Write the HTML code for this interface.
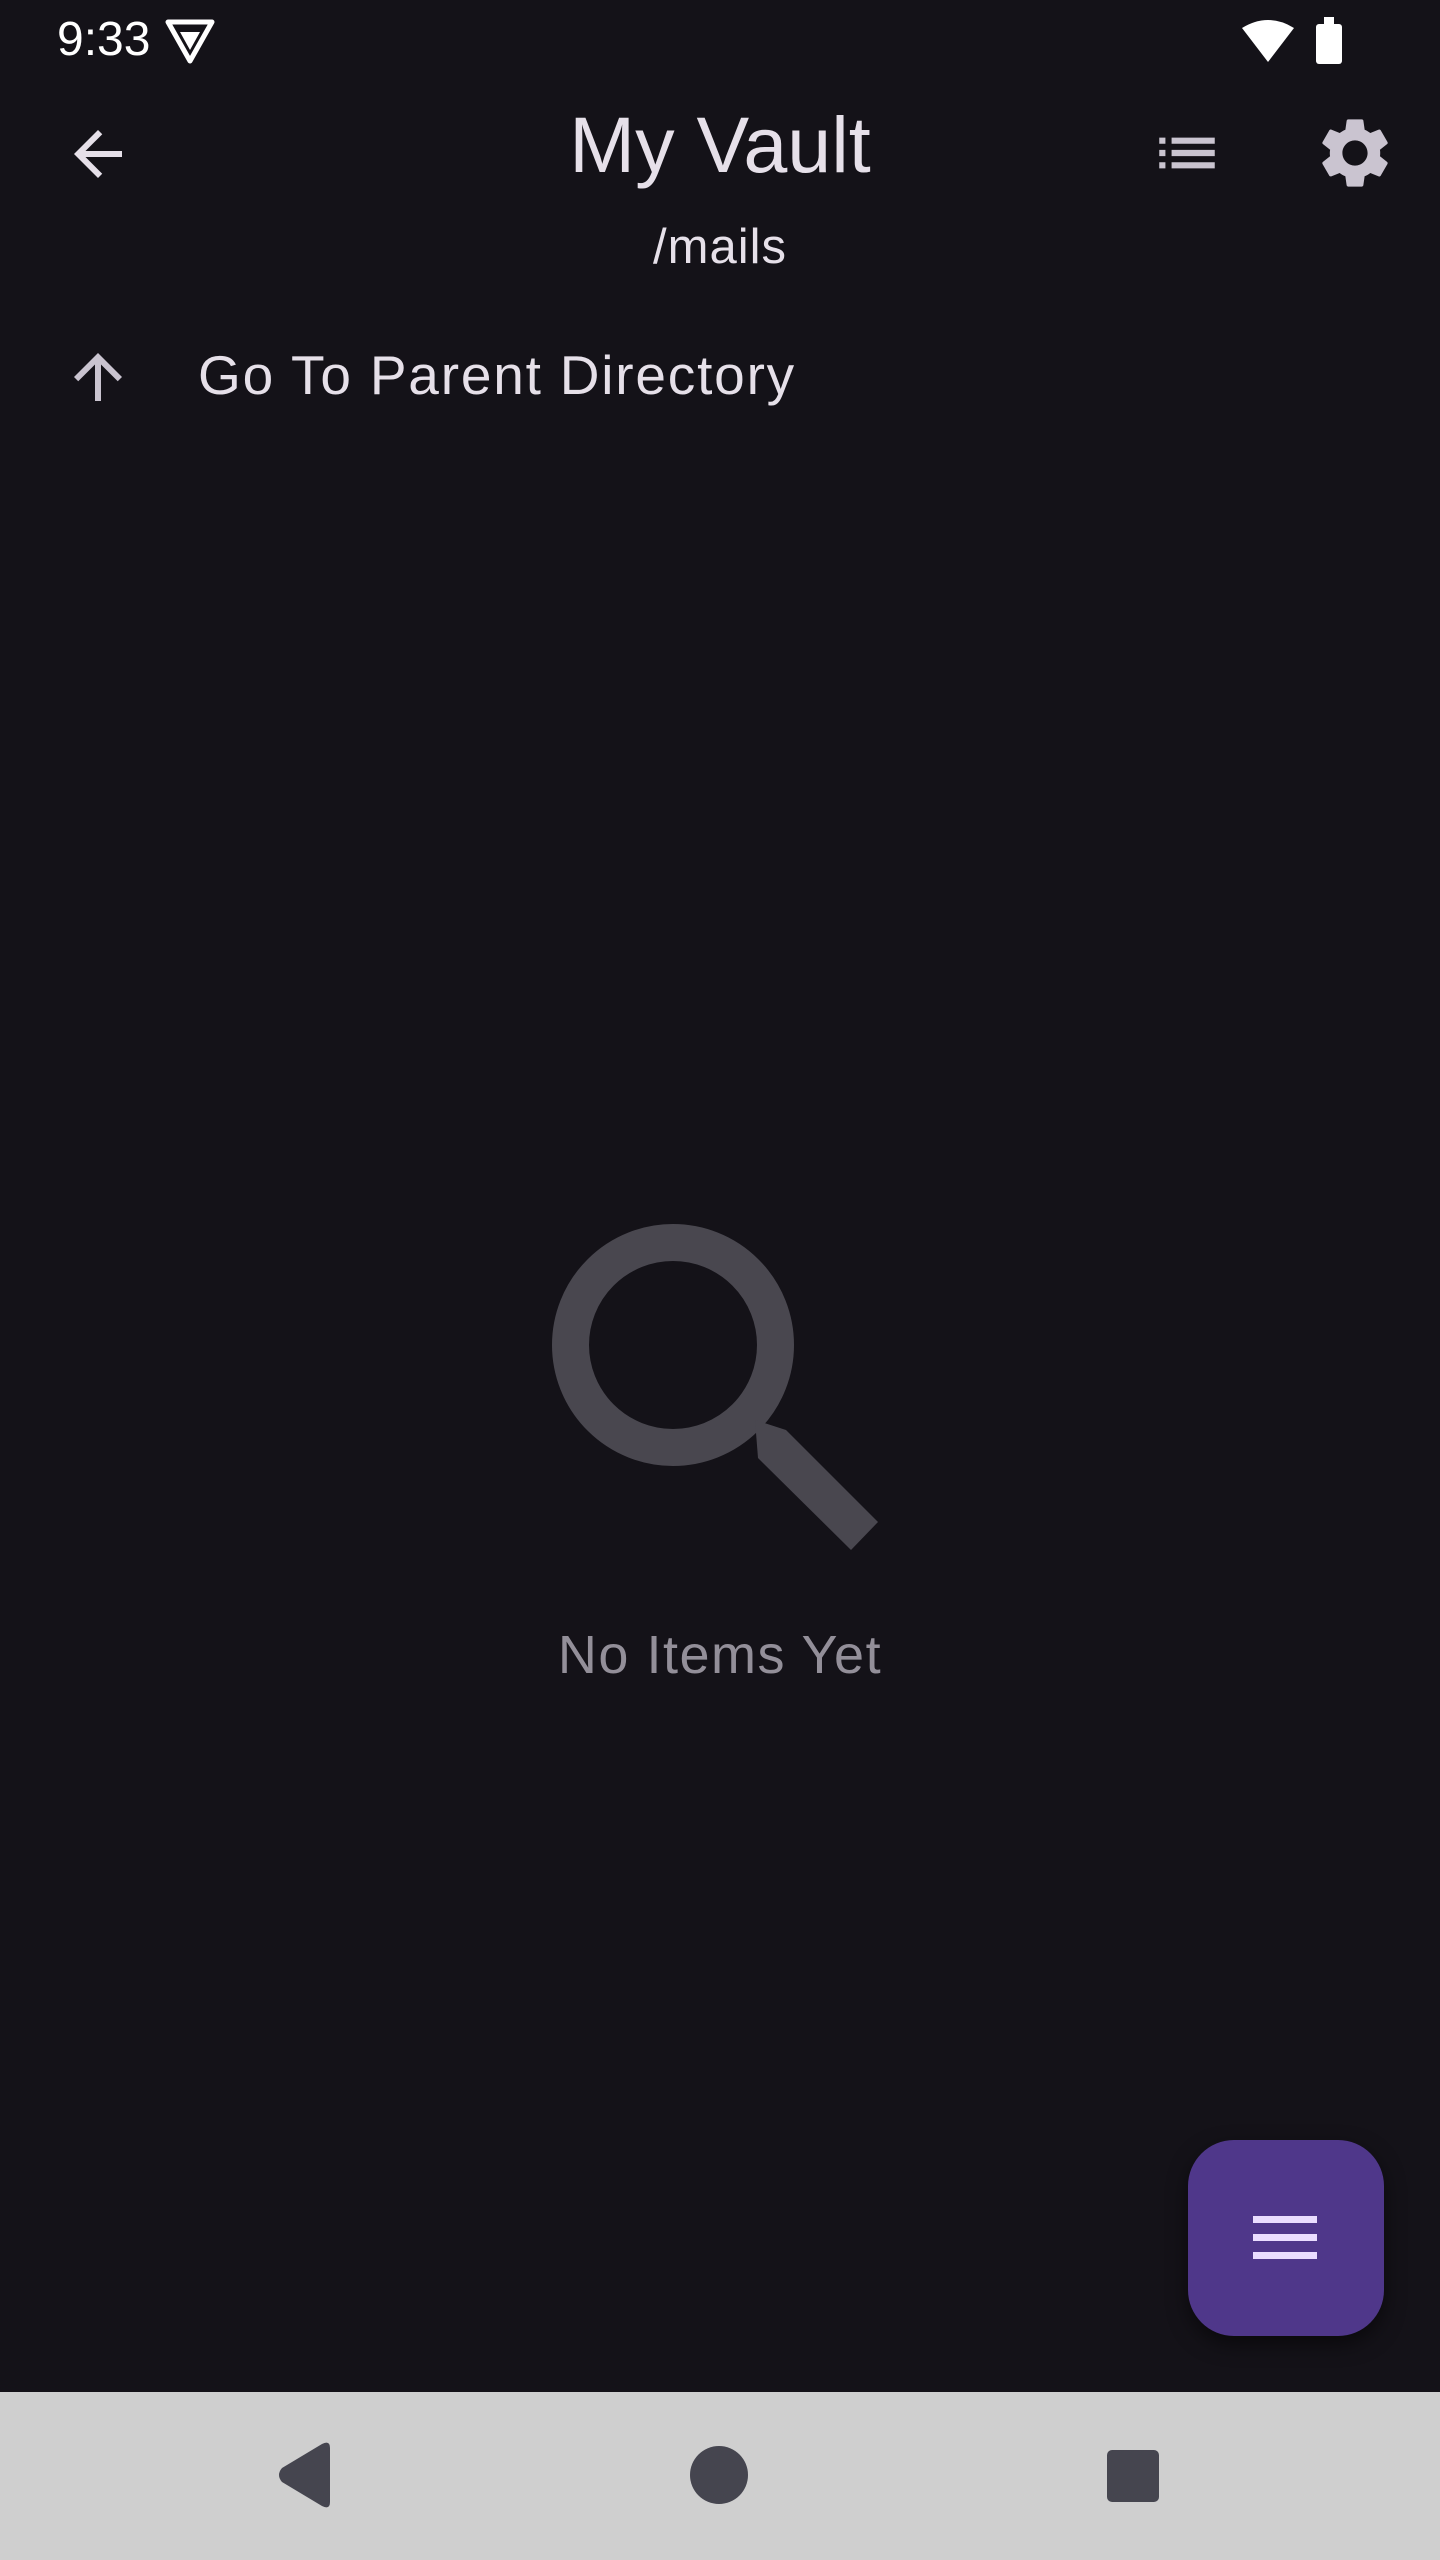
<!DOCTYPE html>
<html><head><meta charset="utf-8"><style>
*{margin:0;padding:0;box-sizing:border-box}
html,body{width:1440px;height:2560px;background:#141218;overflow:hidden;font-family:"Liberation Sans",sans-serif}
.t{position:absolute;white-space:nowrap;line-height:1}
</style></head><body>
<div class="t" style="left:57px;top:16px;font-size:48px;color:#fff;font-weight:500">9:33</div>
<svg style="position:absolute;left:164px;top:18px" width="52" height="46" viewBox="0 0 52 46"><path d="M4 4 H48 L26 43 Z" fill="none" stroke="#fff" stroke-width="5" stroke-linejoin="round"/><path d="M16 14 H36 L26 32 Z" fill="#fff"/></svg>
<svg style="position:absolute;left:1240px;top:18px" width="56" height="46" viewBox="0 0 56 46"><path d="M2 10 Q28 -6 54 10 L28 44 Z" fill="#fff"/></svg>
<div style="position:absolute;left:1316px;top:24px;width:26px;height:40px;background:#fff;border-radius:3px"></div>
<div style="position:absolute;left:1324px;top:17px;width:10px;height:8px;background:#fff"></div>

<svg style="position:absolute;left:62px;top:118px" width="72" height="72" viewBox="0 0 24 24"><path d="M20 11H7.83l5.59-5.59L12 4l-8 8 8 8 1.41-1.41L7.83 13H20v-2z" fill="#e6e0e9"/></svg>
<div class="t" style="left:0;width:1440px;text-align:center;top:105px;font-size:79px;color:#e6e0e9">My Vault</div>
<div class="t" style="left:0;width:1440px;text-align:center;top:223px;font-size:49px;color:#e6e0e9;letter-spacing:1px">/mails</div>
<svg style="position:absolute;left:1150px;top:116px" width="74" height="74" viewBox="0 0 24 24"><path d="M3 13h2v-2H3v2zm0 4h2v-2H3v2zm0-8h2V7H3v2zm4 4h14v-2H7v2zm0 4h14v-2H7v2zM7 7v2h14V7H7z" fill="#cac4d0"/></svg>
<svg style="position:absolute;left:1313px;top:111px" width="84" height="84" viewBox="0 0 24 24"><path d="M19.14 12.94c.04-.3.06-.61.06-.94 0-.32-.02-.64-.07-.94l2.030-1.58a.49.49 0 0 0 .12-.61l-1.92-3.32a.488.488 0 0 0-.59-.22l-2.39.96c-.5-.38-1.030-.7-1.62-.94l-.36-2.54a.484.484 0 0 0-.48-.41h-3.84c-.24 0-.43.17-.47.41l-.36 2.54c-.59.24-1.13.57-1.62.94l-2.39-.96c-.22-.08-.47 0-.59.22L2.74 8.87c-.12.21-.08.47.12.61l2.030 1.58c-.05.3-.09.63-.09.94s.02.64.07.94l-2.030 1.58a.49.49 0 0 0-.12.61l1.92 3.32c.12.22.37.29.59.22l2.39-.96c.5.38 1.030.7 1.62.94l.36 2.54c.05.24.24.41.48.41h3.84c.24 0 .44-.17.47-.41l.36-2.54c.59-.24 1.13-.56 1.62-.94l2.39.96c.22.08.47 0 .59-.22l1.92-3.32c.12-.22.07-.47-.12-.61l-2.010-1.58zM12 15.6c-1.98 0-3.6-1.62-3.6-3.6s1.62-3.6 3.6-3.6 3.6 1.62 3.6 3.6-1.62 3.6-3.6 3.6z" fill="#cac4d0"/></svg>

<svg style="position:absolute;left:62px;top:341px" width="72" height="72" viewBox="0 0 24 24"><path d="M4 12l1.41 1.41L11 7.83V20h2V7.83l5.58 5.59L20 12l-8-8-8 8z" fill="#cac4d0"/></svg>
<div class="t" style="left:198px;top:348px;font-size:55px;color:#e6e0e9;letter-spacing:1.8px">Go To Parent Directory</div>

<svg style="position:absolute;left:0;top:0" width="1440" height="2560">
<circle cx="673" cy="1345" r="102.5" fill="none" stroke="#49474f" stroke-width="37"/>
<path d="M755 1420 L786 1430 L878 1522 L851 1550 L758 1458 Z" fill="#49474f"/>
</svg>
<div class="t" style="left:0;width:1440px;text-align:center;top:1628px;font-size:54px;color:#938f99;letter-spacing:1.5px">No Items Yet</div>

<div style="position:absolute;left:1188px;top:2140px;width:196px;height:196px;border-radius:46px;background:#4f378a;box-shadow:0 8px 20px rgba(0,0,0,.5)"></div>
<div style="position:absolute;left:1253px;top:2216px;width:64px;height:7px;background:#eaddff"></div>
<div style="position:absolute;left:1253px;top:2234px;width:64px;height:7px;background:#eaddff"></div>
<div style="position:absolute;left:1253px;top:2252px;width:64px;height:7px;background:#eaddff"></div>

<div style="position:absolute;left:0;top:2392px;width:1440px;height:168px;background:#cfcfcf"></div>
<svg style="position:absolute;left:0;top:2392px" width="1440" height="168">
<path d="M330 56 L330 110 Q330 118 322 114 L282 90 Q276 83 282 76 L322 52 Q330 48 330 56Z" fill="#45454f"/>
<circle cx="719" cy="83" r="29" fill="#45454f"/>
<rect x="1107" y="58" width="52" height="52" rx="5" fill="#45454f"/>
</svg>
</body></html>
